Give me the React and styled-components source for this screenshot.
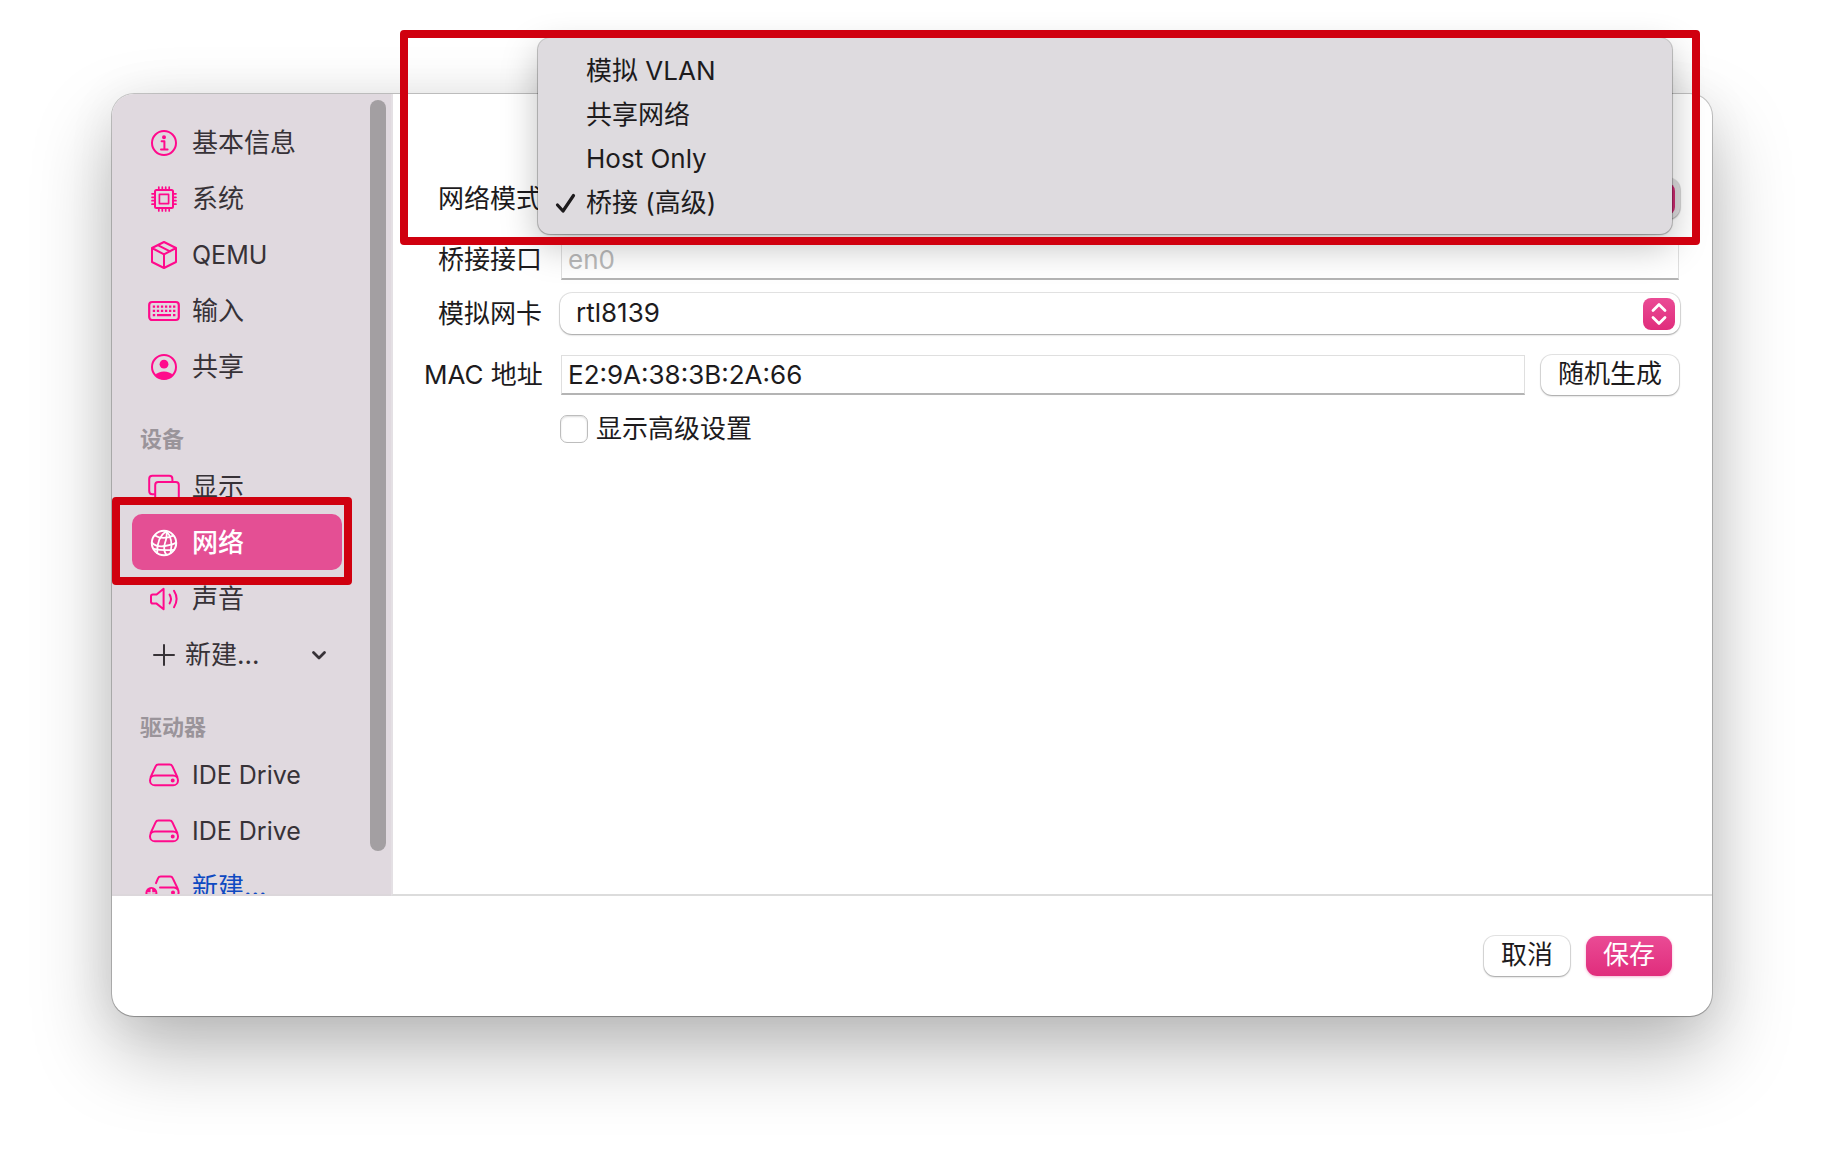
import React from "react";
import styled, { createGlobalStyle, css } from "styled-components";

const GlobalStyle = createGlobalStyle`
  *, *::before, *::after { box-sizing: border-box; }
  body {
    margin: 0;
    background: #fff;
    color: #1d1b1d;
    font-family: Inter, "Noto Sans CJK SC", sans-serif;
    font-size: 26px;
    line-height: 32px;
  }
  button, input, select { font: inherit; color: inherit; margin: 0; }
`;

const PINK = "#ff0a8c";
const RED = "#d0000f";

const Page = styled.main`
  height: 100vh;
  min-height: 640px;
  padding: 94px 112px 148px;
  display: flex;
  overflow: hidden;
`;

const Sheet = styled.section`
  flex: 1;
  min-width: 0;
  display: flex;
  flex-direction: column;
  border-radius: 22px;
  background: #fff;
  box-shadow: 0 0 0 1px rgba(0, 0, 0, 0.2), 0 1px 1px 0 rgba(0, 0, 0, 0.16),
    0 36px 80px rgba(0, 0, 0, 0.27), 0 4px 50px rgba(0, 0, 0, 0.07);
`;

const Body = styled.div`
  flex: 1;
  min-height: 0;
  display: flex;
`;

const Sidebar = styled.aside`
  width: 279px;
  flex: none;
  display: flex;
  background: #e0d9df;
  border-top-left-radius: 22px;
  overflow: hidden;
  border-bottom: 2px solid #dcd7db;
`;

const Nav = styled.nav`
  flex: 1;
  padding: 20px 28px 0 20px;
  overflow: hidden;
`;

const Group = styled.ul`
  list-style: none;
  margin: 0;
  padding: 0;
`;

const GroupTitle = styled.h2`
  margin: 0;
  padding: 33px 8px 7px;
  font-size: 22px;
  line-height: 24px;
  font-weight: 700;
  color: #9a949a;
`;

const NavItem = styled.li`
  position: relative;
`;

const NavButton = styled.button`
  width: 100%;
  height: 56px;
  display: flex;
  align-items: center;
  gap: ${(p) => (p.$compact ? "5px" : "12px")};
  padding: 2px 16px 0;
  border: 0;
  border-radius: 10px;
  background: ${(p) => (p.$active ? "#e44f94" : "transparent")};
  color: ${(p) => (p.$active ? "#fff" : p.$accent ? "#0f4ac2" : "#373237")};
  font-size: ${(p) => (p.$latin ? "25px" : "26px")};
  font-weight: ${(p) => (p.$active ? 500 : 400)};
  text-align: left;
  white-space: nowrap;
  > svg:first-child { color: ${(p) => (p.$active ? "#fff" : p.$compact ? "#373237" : PINK)}; }
  > svg:last-child:not(:first-child) { margin-left: auto; }
`;

const Glyph = styled.svg`
  width: ${(p) => p.$size || 32}px;
  height: ${(p) => p.$size || 32}px;
  flex: none;
  overflow: visible;
  fill: none;
  stroke: currentColor;
  stroke-width: 2;
  stroke-linecap: round;
  stroke-linejoin: round;
`;

const ScrollTrack = styled.div`
  flex: none;
  width: 21px;
  padding: 6px 5px 12px 0;
`;

const ScrollThumb = styled.div`
  height: 96%;
  border-radius: 8px;
  background: #a39fa2;
`;

const Highlight = styled.div`
  position: absolute;
  z-index: 3;
  border: 8px solid ${RED};
  border-radius: 4px;
  pointer-events: none;
  ${(p) =>
    p.$target === "nav"
      ? css`inset: -17px -10px -15px -20px;`
      : css`left: 7px; right: 12px; top: -64px; height: 215px;`}
`;

const Panel = styled.div`
  position: relative;
  flex: 1;
  min-width: 0;
  padding: 84px 32px 0 31px;
  border-left: 2px solid #e4e0e4;
  border-bottom: 2px solid #dcdcdc;
`;

const Row = styled.div`
  display: grid;
  grid-template-columns: 118px 1fr;
  column-gap: 18px;
  align-items: center;
  margin-bottom: ${(p) => p.$space || 21}px;
`;

const Label = styled.label`
  text-align: right;
  white-space: nowrap;
`;

const Field = styled.div`
  position: relative;
  display: flex;
  align-items: center;
  gap: ${(p) => (p.$small ? "8px" : "16px")};
  padding-left: ${(p) => (p.$flush ? "0" : "1px")};
  padding-right: ${(p) => (p.$flush ? "0" : "1px")};
`;

const TextInput = styled.input`
  flex: 1;
  min-width: 0;
  height: 40px;
  padding: 0 6px;
  border: 1px solid #dfdfdf;
  border-bottom: 2px solid #b4b4b4;
  border-radius: 0;
  background: transparent;
  outline: 0;
  &::placeholder { color: #b9b9b9; opacity: 1; }
`;

const raised = css`
  background: #fff;
  box-shadow: 0 0 0 1px rgba(0, 0, 0, 0.1), 0 1px 2px rgba(0, 0, 0, 0.3);
`;

const Select = styled.select`
  appearance: none;
  flex: 1;
  min-width: 0;
  height: 41px;
  padding: 0 44px 1px 16px;
  border: 0;
  border-radius: 12px;
  ${raised}
  ${(p) => p.$pressed && css`background: #dcdadc;`}
`;

const Stepper = styled.span`
  position: absolute;
  right: 5px;
  top: 5px;
  width: 32px;
  height: 32px;
  border-radius: 8px;
  color: #fff;
  background: ${(p) => (p.$pressed ? "#c92a70" : "linear-gradient(#ea4b95, #e02d7c)")};
  pointer-events: none;
`;

const Menu = styled.ul`
  position: absolute;
  z-index: 2;
  left: -22px;
  right: 8px;
  top: -140px;
  margin: 0;
  padding: 11px 0 9px;
  list-style: none;
  border-radius: 12px;
  background: #dedbdf;
  box-shadow: 0 0 0 1px rgba(0, 0, 0, 0.18), 0 1px 2px rgba(0, 0, 0, 0.2),
    0 12px 36px rgba(0, 0, 0, 0.25);
`;

const Option = styled.li`
  height: 44px;
  display: grid;
  grid-template-columns: 24px 1fr;
  column-gap: 8px;
  align-items: center;
  padding: 0 16px;
  white-space: nowrap;
  > span { grid-column: 2; }
`;

const Checkbox = styled.input`
  appearance: none;
  flex: none;
  width: 28px;
  height: 28px;
  border: 1px solid #bdbdbd;
  border-radius: 7px;
  background: #fff;
  box-shadow: inset 0 1px 2px rgba(0, 0, 0, 0.14);
  &:checked { background: #e44f94; }
`;

const Footer = styled.footer`
  height: 120px;
  flex: none;
  display: flex;
  align-items: center;
  justify-content: flex-end;
  gap: 16px;
  padding: 0 40px;
`;

const Button = styled.button`
  height: 40px;
  padding: 0 17px 2px;
  border: 0;
  border-radius: 11px;
  white-space: nowrap;
  ${raised}
  ${(p) =>
    p.$primary &&
    css`
      color: #fff;
      background: linear-gradient(#ea4b95, #e02d7c);
      box-shadow: 0 1px 3px rgba(224, 45, 124, 0.35);
    `}
`;

const Drive = () => (
  <>
    <path d="M2.6 18.2 7.6 7.4Q8.4 5.6 10.4 5.6H21.6Q23.6 5.6 24.4 7.4L29.4 18.2" />
    <rect x="2" y="16.5" width="28" height="9.8" rx="4.9" />
    <circle cx="24.7" cy="21.4" r="1" fill="currentColor" />
  </>
);

const shapes = {
  info: (
    <>
      <circle cx="16" cy="16" r="12" />
      <circle cx="16" cy="10.2" r="1" fill="currentColor" />
      <path d="M13.6 14.2H16.4V22.2M13 22.4H19.6" />
    </>
  ),
  chip: (
    <>
      <rect x="7" y="7" width="18" height="18" rx="1.5" />
      <rect x="11.4" y="11.4" width="9.2" height="9.2" strokeWidth="1.7" />
      {[10.8, 14.3, 17.7, 21.2].map((v) => (
        <path key={v} strokeWidth="1.7" d={`M${v} 4v3M${v} 25v3M4 ${v}h3M25 ${v}h3`} />
      ))}
    </>
  ),
  box: <path d="M16 3 28 9v14L16 29 4 23V9ZM4 9l12 6.4L28 9M16 15.4v13.4M9.8 6.2l12.2 6.2" strokeWidth="2" />,
  keyboard: (
    <>
      <rect x="1.2" y="7" width="29.6" height="18" rx="3" strokeWidth="2.2" />
      <path strokeLinecap="butt" strokeDasharray="2.3 1.75" d="M4.8 11.6h22.6M4.8 15.9h22.6" strokeWidth="2.3" />
      <path strokeLinecap="butt" d="M4.8 20.2h2.4M9 20.2h14M25 20.2h2.4" strokeWidth="2.2" />
    </>
  ),
  person: (
    <>
      <circle cx="16" cy="16" r="12" />
      <circle cx="16" cy="13.2" r="4.4" fill="currentColor" stroke="none" />
      <path d="M7 24.2Q10.5 20.6 16 20.6T25 24.2Q21 28.4 16 28.4T7 24.2Z" fill="currentColor" stroke="none" />
    </>
  ),
  displays: (
    <>
      <path d="M6 23.2H4.4Q1.2 23.2 1.2 20V8Q1.2 4.8 4.4 4.8H21.2Q24.4 4.8 24.4 8V10" />
      <rect x="7.2" y="11" width="23.6" height="18.4" rx="3" />
    </>
  ),
  globe: (
    <g strokeWidth="1.8">
      <circle cx="16" cy="16" r="12.2" strokeWidth="2" />
      <path d="M18.4 4Q8.6 10.4 9.2 26.2M18.4 4Q19.4 9 17 16T18.6 28M18.4 4Q25.6 12 22.6 26" />
      <path d="M7 8.4Q14.4 13.2 25.4 8.6M4 15.6Q8 20.4 17 19T28 15.4M5.6 21.8Q15 24 25.8 22.8" />
    </g>
  ),
  speaker: (
    <path d="M3 13.4Q3 11.6 4.8 11.6H8.6L15.6 5.8V26.2L8.6 20.6H4.8Q3 20.6 3 18.8ZM21.6 11.6Q24.4 16 21.6 20.4M26 7.8Q31.2 16 26 24.2" />
  ),
  plus: <path d="M16 6v20M6 16h20" />,
  drive: <Drive />,
  driveAdd: (
    <>
      <path d="M8 12.2 10 7.4Q10.8 5.6 12.8 5.6H22.2Q24 5.6 24.8 7.4L29.6 17.4" />
      <path d="M12 16.5H26Q30.6 17 30.6 21.4T26 26.3H12" />
      <circle cx="25" cy="21.4" r="1" fill="currentColor" />
      <circle cx="3.4" cy="22" r="6" fill="currentColor" stroke="none" />
      <path d="M3.4 18.6v6.8M0 22h6.8" stroke="#e0d9df" strokeWidth="1.6" />
    </>
  ),
};

const Icon = ({ name }) => (
  <Glyph viewBox="0 0 32 32" aria-hidden="true">
    {shapes[name]}
  </Glyph>
);

const groups = [
  {
    items: [
      { icon: "info", text: "基本信息" },
      { icon: "chip", text: "系统" },
      { icon: "box", text: "QEMU", latin: true },
      { icon: "keyboard", text: "输入" },
      { icon: "person", text: "共享" },
    ],
  },
  {
    title: "设备",
    items: [
      { icon: "displays", text: "显示" },
      { icon: "globe", text: "网络", active: true },
      { icon: "speaker", text: "声音" },
      { icon: "plus", text: "新建...", menu: true },
    ],
  },
  {
    title: "驱动器",
    items: [
      { icon: "drive", text: "IDE Drive", latin: true },
      { icon: "drive", text: "IDE Drive", latin: true },
      { icon: "driveAdd", text: "新建...", accent: true },
    ],
  },
];

const modes = [
  { text: "模拟 VLAN" },
  { text: "共享网络" },
  { text: "Host Only" },
  { text: "桥接 (高级)", selected: true },
];

const StepperArrows = ({ pressed }) => (
  <Stepper $pressed={pressed}>
    <Glyph viewBox="0 0 32 32" aria-hidden="true">
      <path d="M10 12.4 16 6.4 22 12.4M10 19.6 16 25.6 22 19.6" strokeWidth="2.8" />
    </Glyph>
  </Stepper>
);

export default function App() {
  return (
    <>
      <GlobalStyle />
      <Page>
        <Sheet>
          <Body>
            <Sidebar>
              <Nav>
                {groups.map((group, g) => (
                  <React.Fragment key={g}>
                    {group.title && <GroupTitle>{group.title}</GroupTitle>}
                    <Group>
                      {group.items.map((item, i) => (
                        <NavItem key={i}>
                          <NavButton
                            type="button"
                            $active={item.active}
                            $accent={item.accent}
                            $compact={item.menu}
                            $latin={item.latin}
                          >
                            <Icon name={item.icon} />
                            <span>{item.text}</span>
                            {item.menu && (
                              <Glyph $size={14} viewBox="0 0 14 14" aria-hidden="true">
                                <path d="M1.5 4.5 7 10l5.5-5.5" strokeWidth="2.8" />
                              </Glyph>
                            )}
                          </NavButton>
                          {item.active && <Highlight $target="nav" />}
                        </NavItem>
                      ))}
                    </Group>
                  </React.Fragment>
                ))}
              </Nav>
              <ScrollTrack>
                <ScrollThumb />
              </ScrollTrack>
            </Sidebar>
            <Panel>
              <Row>
                <Label htmlFor="mode">网络模式</Label>
                <Field $flush>
                  <Select id="mode" defaultValue="桥接 (高级)" $pressed>
                    {modes.map((m) => (
                      <option key={m.text}>{m.text}</option>
                    ))}
                  </Select>
                  <StepperArrows pressed />
                  <Menu role="listbox" aria-label="网络模式">
                    {modes.map((m) => (
                      <Option key={m.text} role="option" aria-selected={!!m.selected}>
                        {m.selected && (
                          <Glyph $size={24} viewBox="0 0 24 24" aria-hidden="true">
                            <path d="M3.5 14 9 20 19.5 4.5" strokeWidth="3.2" />
                          </Glyph>
                        )}
                        <span>{m.text}</span>
                      </Option>
                    ))}
                  </Menu>
                </Field>
              </Row>
              <Row $space={13}>
                <Label htmlFor="interface">桥接接口</Label>
                <Field>
                  <TextInput id="interface" type="text" placeholder="en0" />
                </Field>
              </Row>
              <Row>
                <Label htmlFor="card">模拟网卡</Label>
                <Field $flush>
                  <Select id="card" defaultValue="rtl8139">
                    <option>rtl8139</option>
                  </Select>
                  <StepperArrows />
                </Field>
              </Row>
              <Row $space={18}>
                <Label htmlFor="mac">MAC 地址</Label>
                <Field>
                  <TextInput id="mac" type="text" defaultValue="E2:9A:38:3B:2A:66" />
                  <Button type="button">随机生成</Button>
                </Field>
              </Row>
              <Row>
                <span />
                <Field $small $flush>
                  <Checkbox id="advanced" type="checkbox" />
                  <label htmlFor="advanced">显示高级设置</label>
                </Field>
              </Row>
              <Highlight $target="menu" />
            </Panel>
          </Body>
          <Footer>
            <Button type="button">取消</Button>
            <Button type="submit" $primary>保存</Button>
          </Footer>
        </Sheet>
      </Page>
    </>
  );
}
